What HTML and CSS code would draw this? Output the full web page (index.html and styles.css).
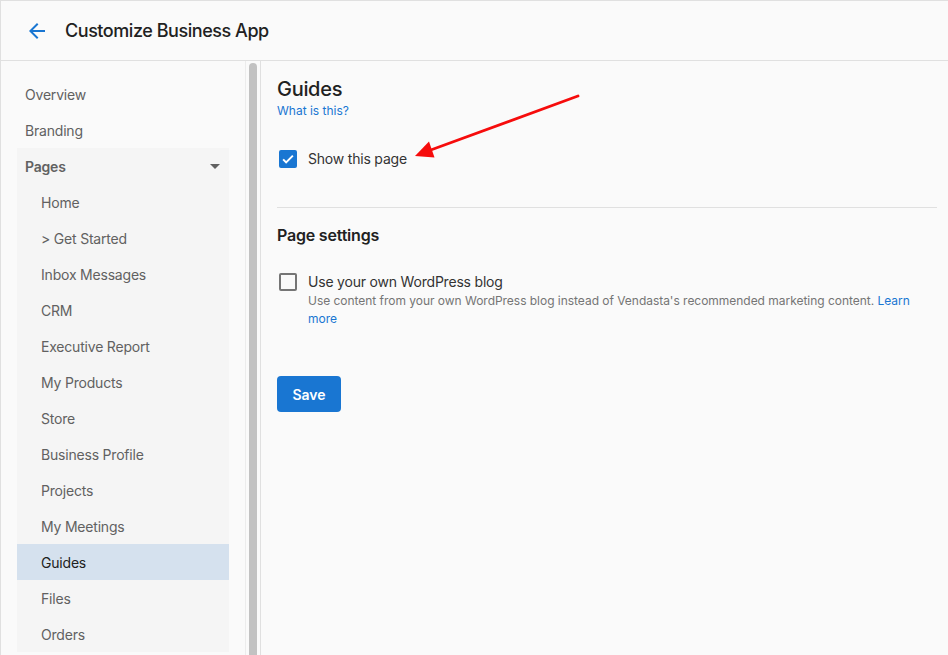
FILE: index.html
```html
<!DOCTYPE html>
<html lang="en">
<head>
<meta charset="utf-8">
<title>Customize Business App</title>
<link rel="stylesheet" href="styles.css">
</head>
<body>
<div class="app">
  <header class="topbar">
    <svg class="back" viewBox="0 0 24 24" width="24" height="24"><path d="M20 11H7.83l5.59-5.59L12 4l-8 8 8 8 1.41-1.41L7.83 13H20v-2z" fill="#1976d2"/></svg>
    <h1 class="title">Customize Business App</h1>
  </header>
  <div class="body">
    <nav class="sidebar">
      <div class="item">Overview</div>
      <div class="item">Branding</div>
      <div class="group">
        <div class="item group-head">Pages
          <svg class="caret" viewBox="0 0 24 24" width="24" height="24"><path d="M7 10l5 5 5-5z" fill="#616161"/></svg>
        </div>
        <div class="item sub">Home</div>
        <div class="item sub">&gt; Get Started</div>
        <div class="item sub">Inbox Messages</div>
        <div class="item sub">CRM</div>
        <div class="item sub">Executive Report</div>
        <div class="item sub">My Products</div>
        <div class="item sub">Store</div>
        <div class="item sub">Business Profile</div>
        <div class="item sub">Projects</div>
        <div class="item sub">My Meetings</div>
        <div class="item sub active">Guides</div>
        <div class="item sub">Files</div>
        <div class="item sub">Orders</div>
      </div>
    </nav>
    <div class="scrolltrack"><div class="thumb"></div></div>
    <main class="content">
      <h2 class="page-title">Guides</h2>
      <a class="link what">What is this?</a>
      <div class="check-row first">
        <span class="box checked">
          <svg viewBox="0 0 24 24" width="18" height="18"><path d="M5.5 12.5l4 4 9-9" fill="none" stroke="#fff" stroke-width="2.6"/></svg>
        </span>
        <span class="label">Show this page</span>
      </div>
      <hr class="divider">
      <h3 class="section-title">Page settings</h3>
      <div class="check-row second">
        <span class="box"></span>
        <div class="text">
          <span class="label">Use your own WordPress blog</span>
          <p class="desc">Use content from your own WordPress blog instead of Vendasta's recommended marketing content. <a class="link">Learn more</a></p>
        </div>
      </div>
      <button class="save">Save</button>
    </main>
  </div>
  <svg class="annotation" width="948" height="655" viewBox="0 0 948 655">
    <line x1="578" y1="96" x2="428" y2="151" stroke="#f60c0c" stroke-width="2.8" stroke-linecap="round"/>
    <polygon points="415,156 429,141.5 434.5,157.5" fill="#f60c0c"/>
  </svg>
</div>
</body>
</html>
```
FILE: styles.css
```css
* { box-sizing: border-box; }
html, body { margin: 0; padding: 0; }
body {
  width: 948px;
  height: 655px;
  overflow: hidden;
  background: #fafafa;
  font-family: Inter, "Noto Sans", "Liberation Sans", sans-serif;
  color: #212121;
}
.app {
  position: relative;
  height: 655px;
  border-top: 1px solid #e0e0e0;
  border-left: 1px solid #e0e0e0;
  display: flex;
  flex-direction: column;
}
.topbar {
  height: 60px;
  flex: none;
  border-bottom: 1px solid #e0e0e0;
  display: flex;
  align-items: center;
  padding-left: 24px;
  background: #fafafa;
}
.back { flex: none; }
.title {
  margin: 0 0 0 16px;
  font-size: 18px;
  font-weight: 500;
  color: #212121;
  letter-spacing: -0.45px;
}
.body {
  flex: 1;
  display: flex;
  min-height: 0;
}
.sidebar {
  width: 245px;
  flex: none;
  padding: 15px 16px 0 16px;
  border-right: 1px solid #ececec;
  background: #fafafa;
  font-size: 14px;
  color: #616161;
  letter-spacing: -0.2px;
}
.item {
  height: 36px;
  display: flex;
  align-items: center;
  padding-left: 8px;
}
.group { background: #f5f5f5; }
.group-head {
  font-weight: 600;
  justify-content: space-between;
  padding-right: 2px;
}
.sub { padding-left: 24px; }
.active { background: #d5e1ee; color: #212121; }
.scrolltrack {
  width: 15px;
  flex: none;
  border-right: 1px solid #e0e0e0;
  padding: 2px 3px 0 3px;
  background: #fafafa;
}
.thumb {
  width: 8px;
  height: 100%;
  background: #c2c2c2;
  border-radius: 4px 4px 0 0;
}
.content {
  flex: 1;
  padding: 16px 11px 0 16px;
}
.page-title {
  margin: 0;
  font-size: 20px;
  line-height: 24px;
  font-weight: 500;
  color: #212121;
  letter-spacing: -0.3px;
}
.link { color: #1976d2; text-decoration: none; }
.what {
  display: block;
  margin-top: 2px;
  font-size: 12px;
  line-height: 16px;
}
.check-row {
  display: flex;
  align-items: flex-start;
  font-size: 14px;
  color: #212121;
}
.check-row.first { margin-top: 30px; align-items: center; }
.box {
  width: 18px;
  height: 18px;
  flex: none;
  margin: 0 11px 0 2px;
  border: 2px solid #757575;
  border-radius: 2px;
  display: flex;
  align-items: center;
  justify-content: center;
}
.box.checked { background: #1976d2; border-color: #1976d2; }
.box.checked svg { flex: none; }
.label { line-height: 20px; color: #333; letter-spacing: -0.2px; }
.divider {
  margin: 38px 0 0 0;
  border: 0;
  border-top: 1px solid #e0e0e0;
  height: 0;
}
.section-title {
  margin: 15px 0 0 0;
  font-size: 16px;
  line-height: 24px;
  font-weight: 600;
  color: #212121;
  letter-spacing: -0.2px;
}
.check-row.second { margin-top: 26px; }
.check-row.second .label { display: block; line-height: 18px; }
.text { display: flex; flex-direction: column; }
.desc {
  margin: 1px 0 0 0;
  font-size: 12px;
  line-height: 18px;
  color: #757575;
  letter-spacing: -0.03px;
}
.save {
  margin-top: 48px;
  width: 64px;
  height: 36px;
  border: 0;
  border-radius: 4px;
  background: #1976d2;
  color: #fff;
  font-family: inherit;
  font-size: 14px;
  font-weight: 600;
}
.annotation {
  position: absolute;
  left: -1px;
  top: -1px;
  pointer-events: none;
}
```
